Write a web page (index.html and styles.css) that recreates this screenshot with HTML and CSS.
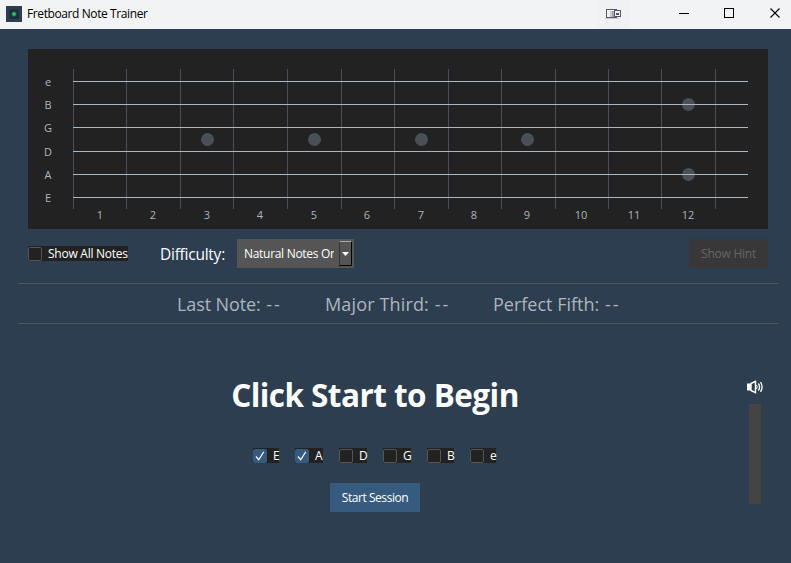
FILE: index.html
```html
<!DOCTYPE html>
<html lang="en">
<head>
<meta charset="utf-8">
<title>Fretboard Note Trainer</title>
<link rel="stylesheet" href="styles.css">
</head>
<body>
<header class="titlebar">
  <svg class="app-icon" width="16" height="16"><rect width="16" height="16" fill="#2c3e50"/><rect x="3" y="3" width="10" height="10" fill="#223440"/><path d="M3 5.5h10M3 8.5h10M3 11.5h10M5.5 3v10M8.5 3v10M11.5 3v10" stroke="#1c2c36" stroke-width="1"/><circle cx="8" cy="8" r="2.600" fill="#20604a"/><circle cx="8" cy="8" r="1.700" fill="#2ecc71"/></svg>
  <span class="app-name">Fretboard Note Trainer</span>
  <svg class="window-controls" width="200" height="28" fill="none" shape-rendering="crispEdges">
    <rect x="6" y="0" width="32" height="28" fill="#eff1f3"/>
    <path d="M14.500 17.500v1h13" stroke="#c9cbd0"/>
    <rect x="15.500" y="9.500" width="10" height="8" stroke="#565864"/>
    <rect x="19" y="11" width="2" height="6" fill="#c6c8ce"/><rect x="21" y="11" width="2" height="6" fill="#a4a6ae"/>
    <rect x="23.500" y="10.500" width="6" height="6" fill="#eff1f3" stroke="#565864"/>
    <rect x="25" y="13" width="3" height="2" fill="#565864"/>
    <path d="M88 13.500h10" stroke="#000"/>
    <rect x="133.500" y="8.500" width="9" height="9" rx="1" stroke="#000"/>
    <path d="M179.500 8.500l9 9M188.500 8.500l-9 9" stroke="#000" shape-rendering="auto" stroke-width="1.100"/>
  </svg>
</header>
<main class="app">
  <svg class="fretboard" width="740" height="180" viewBox="28 49 740 180">
    <g class="frets"><path d="M73.500 69v140M126.500 69v140M180.500 69v140M233.500 69v140M287.500 69v140M341.500 69v140M394.500 69v140M448.500 69v140M501.500 69v140M555.500 69v140M608.500 69v140M661.500 69v140M715.500 69v140"/></g>
    <g class="markers"><circle cx="207.500" cy="139.500" r="6.500"/><circle cx="314.500" cy="139.500" r="6.500"/><circle cx="421.500" cy="139.500" r="6.500"/><circle cx="527.500" cy="139.500" r="6.500"/><circle cx="688.500" cy="104.500" r="6.500"/><circle cx="688.500" cy="174.500" r="6.500"/></g>
    <g class="strings"><path d="M73 81.500h675M73 104.500h675M73 127.500h675M73 151.500h675M73 174.500h675M73 197.500h675"/></g>
    <g class="labels">
      <text x="48" y="86">e</text><text x="48" y="109">B</text><text x="48" y="132">G</text><text x="48" y="156">D</text><text x="48" y="179">A</text><text x="48" y="202">E</text>
      <text x="100" y="219">1</text><text x="153" y="219">2</text><text x="207" y="219">3</text><text x="260" y="219">4</text><text x="314" y="219">5</text><text x="367" y="219">6</text><text x="421" y="219">7</text><text x="474" y="219">8</text><text x="527" y="219">9</text><text x="581" y="219">10</text><text x="634" y="219">11</text><text x="688" y="219">12</text>
    </g>
  </svg>
  <section class="toolbar">
    <label class="check show-all"><span class="box"></span><span class="caption">Show All Notes</span></label>
    <span class="difficulty">Difficulty:</span>
    <div class="select"><span class="select-text">Natural Notes Only</span><span class="select-arrow"><svg width="7" height="4"><path d="M0 0h7L3.500 4z" fill="#fff"/></svg></span></div>
    <button class="hint" disabled>Show Hint</button>
  </section>
  <section class="info"><span class="last">Last Note: <span class="value">--</span></span><span class="third">Major Third: <span class="value">--</span></span><span class="fifth">Perfect Fifth: <span class="value">--</span></span></section>
  <section class="session">
    <div class="center">
      <h1>Click Start to Begin</h1>
      <div class="string-checks">
        <label class="check on c-E"><span class="box"><svg width="14" height="14"><path d="M3 7.500l2.700 3.300L10.800 2.800" fill="none" stroke="#fff" stroke-width="1.200"/></svg></span><span class="caption">E</span></label>
        <label class="check on c-A"><span class="box"><svg width="14" height="14"><path d="M3 7.500l2.700 3.300L10.800 2.800" fill="none" stroke="#fff" stroke-width="1.200"/></svg></span><span class="caption">A</span></label>
        <label class="check c-D"><span class="box"></span><span class="caption">D</span></label>
        <label class="check c-G"><span class="box"></span><span class="caption">G</span></label>
        <label class="check c-B"><span class="box"></span><span class="caption">B</span></label>
        <label class="check c-e"><span class="box"></span><span class="caption">e</span></label>
      </div>
      <button class="start">Start Session</button>
    </div>
    <div class="volume">
      <svg width="18" height="14" viewBox="0 0 18 14"><path d="M1 3.500h4v7H1z" fill="#fff"/><path d="M5 3.500L9.500 1.300v11.400L5 10.500z" fill="none" stroke="#fff" stroke-width="1.400"/><path d="M10.500 5q1.500 2 0 4" fill="none" stroke="#fff"/><path d="M12.300 3.500q2.600 3.500 0 7M14.500 2.200q3.200 4.800 0 9.600" fill="none" stroke="#fff" stroke-width="1.300"/></svg>
      <div class="meter"></div>
    </div>
  </section>
</main>
</body>
</html>
```
FILE: styles.css
```css
* { box-sizing: border-box; }
body { margin: 0; width: 791px; height: 563px; overflow: hidden; background: #2c3e50; color: #fff; font-family: "Open Sans", "Noto Sans", sans-serif; font-size: 12px; }
button { border: 0; padding: 0; font: inherit; }
.titlebar { display: flex; align-items: center; height: 29px; padding: 0 0 1px 6px; background: #f1f3f5; color: #000; }
.app-icon { margin-top: -1px; }
.app-name { margin-left: 5px; letter-spacing: -0.4px; margin-top: -1px; white-space: nowrap; }
.window-controls { margin-left: auto; }
.app { padding-top: 20px; }
.fretboard { display: block; margin-left: 28px; background: #222; }
.frets { stroke: #4a4f59; shape-rendering: crispEdges; }
.strings { stroke: #adb5bd; shape-rendering: crispEdges; }
.markers { fill: #495057; }
.labels { fill: #adb5bd; font-size: 11px; text-anchor: middle; }
.toolbar { display: flex; align-items: flex-start; height: 54px; padding: 10px 23px 0 28px; }
.check { display: flex; align-items: center; height: 15px; background: #222; line-height: 15px; white-space: nowrap; }
.box { display: block; flex: none; width: 14px; height: 14px; border: 1px solid #555; border-radius: 2px; }
.box svg { display: block; margin: -1px; }
.on .box { background: #375a7f; border-color: #375a7f; }
.caption { margin-left: 6px; letter-spacing: -0.25px; }
.show-all { width: 100px; margin-top: 7px; }
.difficulty { width: 77px; margin-left: 32px; margin-top: 4px; font-size: 15.5px; line-height: 22px; letter-spacing: -0.25px; }
.select { display: flex; width: 117px; height: 29px; padding: 2px 2px 2px 7px; background: #555; }
.select-text { width: 90px; overflow: hidden; line-height: 26px; white-space: nowrap; letter-spacing: -0.3px; }
.select-arrow { display: flex; align-items: center; justify-content: center; width: 13px; height: 25px; margin-left: 5px; border: 1px solid; border-color: #aaa #000 #000 #333; }
.hint { width: 79px; height: 29px; margin-left: auto; background: #383838; color: #666; letter-spacing: -0.25px; }
.info { display: flex; height: 41px; margin: 0 13px 0 18px; padding-left: 159px; border-top: 1px solid #555; border-bottom: 1px solid #555; color: #adb5bd; font-size: 18px; line-height: 41px; white-space: nowrap; letter-spacing: -0.1px; }
.value { margin-left: 1px; letter-spacing: 2px; }
.last { width: 148px; }
.third { width: 168px; letter-spacing: 0.15px; }
.fifth { letter-spacing: 0; }
.session { display: flex; }
.center { display: flex; flex-direction: column; align-items: center; width: 750px; }
h1 { margin: 48px 0 0; font-size: 31.5px; line-height: 46px; letter-spacing: -0.55px; white-space: nowrap; }
.string-checks { display: flex; width: 244px; margin-top: 30px; }
.c-E { width: 26px; margin-right: 16px; }
.c-A { width: 28px; margin-right: 16px; }
.c-D, .c-G { width: 28px; margin-right: 16px; }
.c-B { width: 27px; margin-right: 16px; }
.c-e { width: 26px; }
.start { width: 90px; height: 29px; margin-top: 20px; background: #375a7f; color: #fff; letter-spacing: -0.45px; }
.volume { margin-top: 56px; margin-left: -4px; }
.volume svg { display: block; }
.meter { width: 12px; height: 100px; margin: 10px 0 0 3px; background: #444; }
```
